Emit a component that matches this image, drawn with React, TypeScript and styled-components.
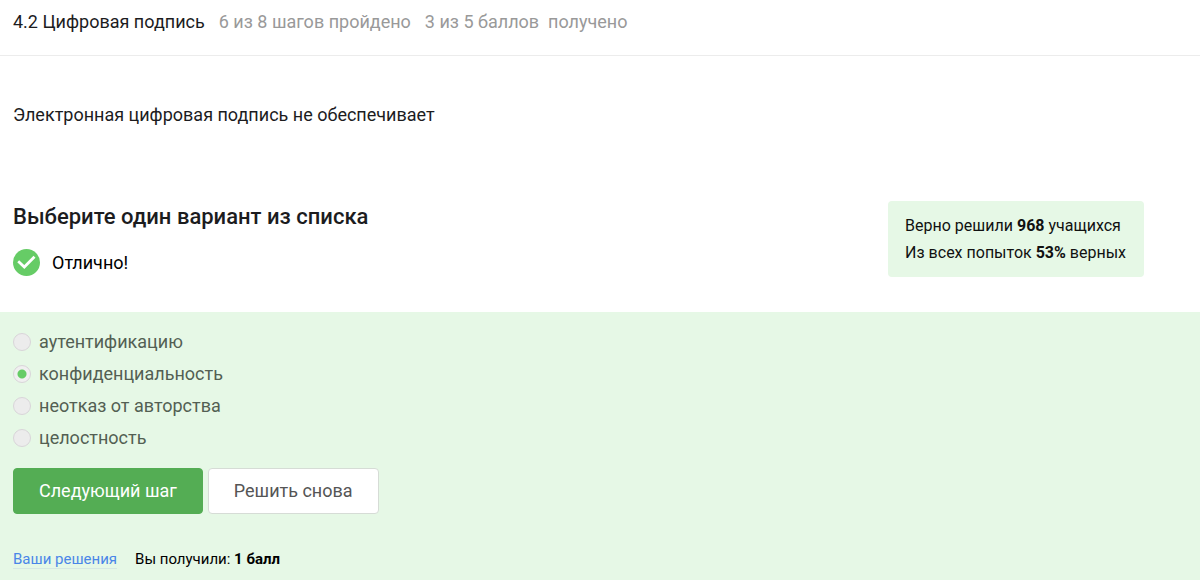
import React, { useState } from "react";
import styled, { createGlobalStyle } from "styled-components";

const GlobalStyle = createGlobalStyle`
  *, *::before, *::after { box-sizing: border-box; }
  body {
    margin: 0;
    background: #fff;
    color: #1c1c1e;
    font: 400 18px/26px Roboto, "Liberation Sans", sans-serif;
  }
`;

const Page = styled.div`
  display: flex;
  flex-direction: column;
  min-height: 100vh;
`;

const Header = styled.header`
  display: flex;
  flex-wrap: wrap;
  gap: 14px;
  padding: 9px 13px 20px;
  border-bottom: 1px solid #ececec;
`;

const LessonTitle = styled.h1`
  margin: 0;
  font-size: 18px;
  font-weight: 400;
`;

const Progress = styled.span`
  color: #999;
  white-space: pre-wrap;
`;

const Question = styled.p`
  margin: 0;
  padding: 46px 13px 73px;
`;

const Summary = styled.section`
  display: flex;
  justify-content: space-between;
  align-items: flex-start;
  padding: 0 56px 35px 13px;
`;

const Prompt = styled.h2`
  margin: 0 0 16px;
  font-size: 22px;
  line-height: 32px;
  font-weight: 500;
`;

const Verdict = styled.div`
  display: flex;
  align-items: center;
  gap: 12px;
  color: #000;
`;

const Stats = styled.aside`
  padding: 11px 18px 11px 17px;
  border-radius: 4px;
  background: #e6f8e6;
  color: #111;
  font-size: 16px;
  line-height: 27px;
`;

const Answer = styled.form`
  flex: 1;
  padding: 14px 13px 8px;
  background: #e6f8e6;
`;

const Options = styled.fieldset`
  display: flex;
  flex-direction: column;
  margin: 0;
  padding: 0;
  border: 0;
`;

const Option = styled.label`
  display: flex;
  align-items: center;
  gap: 8px;
  line-height: 32px;
  color: #535f53;
`;

const Radio = styled.input`
  appearance: none;
  width: 18px;
  height: 18px;
  margin: 0;
  border: 1px solid #d9d5d9;
  border-radius: 50%;
  background: #ececec;

  &:checked {
    background: radial-gradient(circle, #66cc66 4px, #f0f0f0 5px);
  }
`;

const Actions = styled.div`
  display: flex;
  gap: 5px;
  margin: 14px 0 32px;
`;

const Button = styled.button<{ $primary?: boolean }>`
  padding: 9px 25px;
  border: 1px solid ${(p) => (p.$primary ? "#54ad54" : "#d6dcd6")};
  border-radius: 4px;
  background: ${(p) => (p.$primary ? "#54ad54" : "#fff")};
  color: ${(p) => (p.$primary ? "#fff" : "#555")};
  font: inherit;
  cursor: pointer;
`;

const Footer = styled.div`
  display: flex;
  align-items: center;
  gap: 18px;
  color: #000;
  font-size: 15px;
`;

const SolutionsLink = styled.a`
  border-bottom: 1px solid #d6e8e4;
  color: #4a86e8;
  line-height: 18px;
  text-decoration: none;
`;

const answers = ["аутентификацию", "конфиденциальность", "неотказ от авторства", "целостность"];

function CheckMark() {
  return (
    <svg width="27" height="27" viewBox="0 0 27 27" aria-hidden="true">
      <circle cx="13.5" cy="13.5" r="13.5" fill="#66cc66" />
      <path d="M5.2 12.3 11.3 18 21.5 7.8" fill="none" stroke="#fff" strokeWidth="2.8" />
    </svg>
  );
}

export default function App() {
  const [selected, setSelected] = useState(answers[1]);

  return (
    <Page>
      <GlobalStyle />
      <Header>
        <LessonTitle>4.2 Цифровая подпись</LessonTitle>
        <Progress>6 из 8 шагов пройдено</Progress>
        <Progress>{"3 из 5 баллов  получено"}</Progress>
      </Header>
      <Question>Электронная цифровая подпись не обеспечивает</Question>
      <Summary>
        <div>
          <Prompt id="prompt">Выберите один вариант из списка</Prompt>
          <Verdict>
            <CheckMark />
            <span>Отлично!</span>
          </Verdict>
        </div>
        <Stats>
          <div>Верно решили <b>968</b> учащихся</div>
          <div>Из всех попыток <b>53%</b> верных</div>
        </Stats>
      </Summary>
      <Answer onSubmit={(e) => e.preventDefault()}>
        <Options aria-labelledby="prompt">
          {answers.map((answer) => (
            <Option key={answer}>
              <Radio
                type="radio"
                name="answer"
                value={answer}
                checked={selected === answer}
                onChange={() => setSelected(answer)}
              />
              {answer}
            </Option>
          ))}
        </Options>
        <Actions>
          <Button type="submit" $primary>Следующий шаг</Button>
          <Button type="button">Решить снова</Button>
        </Actions>
        <Footer>
          <SolutionsLink href="#solutions">Ваши решения</SolutionsLink>
          <span>Вы получили: <b>1 балл</b></span>
        </Footer>
      </Answer>
    </Page>
  );
}
